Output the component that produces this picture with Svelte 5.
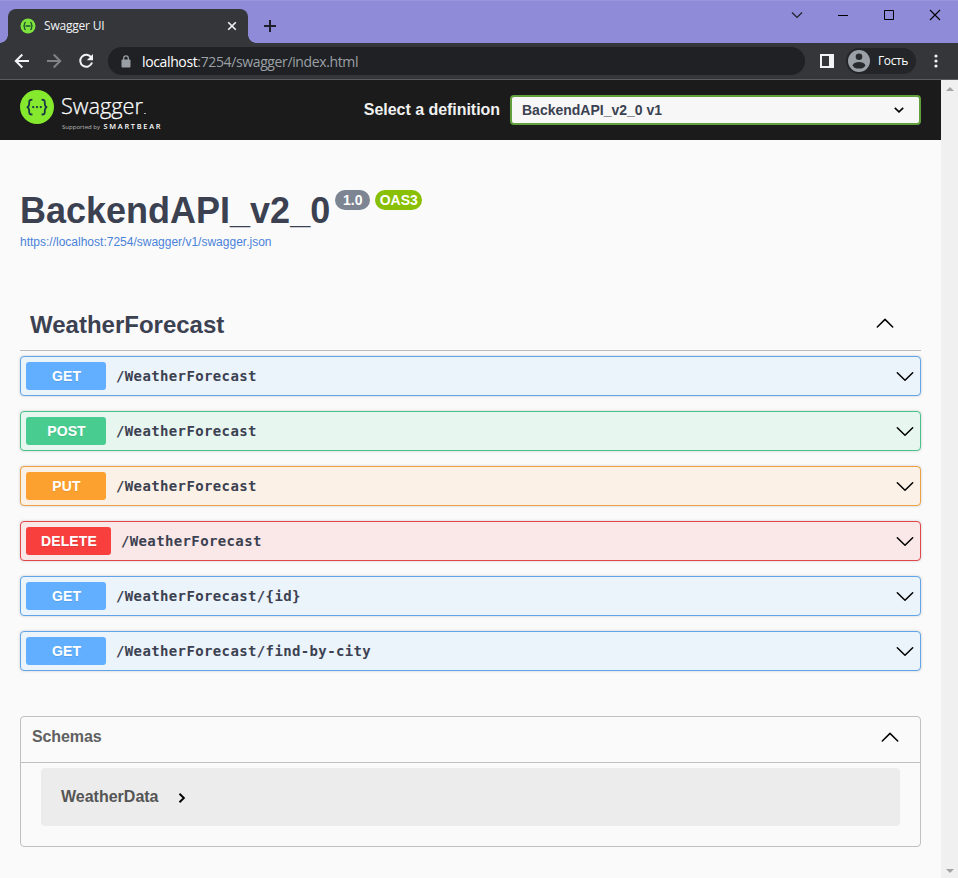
<script>
  const operations = [
    { method: 'GET', kind: 'get', path: '/WeatherForecast' },
    { method: 'POST', kind: 'post', path: '/WeatherForecast' },
    { method: 'PUT', kind: 'put', path: '/WeatherForecast' },
    { method: 'DELETE', kind: 'delete', path: '/WeatherForecast' },
    { method: 'GET', kind: 'get', path: '/WeatherForecast/{id}' },
    { method: 'GET', kind: 'get', path: '/WeatherForecast/find-by-city' }
  ];
</script>

{#snippet chevron(up)}
  <svg class="chevron" width="20" height="20" viewBox="0 0 20 20" fill="none" stroke="#000" stroke-width="1.5" stroke-linecap="round" stroke-linejoin="round">
    <path d={up ? 'M2.3 14 10 6.4l7.7 7.6' : 'M2.3 6.700 10 14.300l7.700-7.600'} />
  </svg>
{/snippet}

<div class="window">
  <div class="tabstrip">
    <div class="tab">
      <svg class="favicon" width="16" height="16" viewBox="0 0 16 16">
        <circle cx="8" cy="8" r="7.5" fill="#7ee23c" />
        <path d="M5.8 4.3c-1.3 0-1.3.5-1.3 1.7S4.300 8 3.400 8c.9 0 1.100.8 1.100 2s0 1.700 1.300 1.700M10.200 4.300c1.300 0 1.300.5 1.300 1.700s.2 2 1.100 2c-.9 0-1.100.8-1.100 2s0 1.700-1.300 1.700M5.500 8h5" fill="none" stroke="#1d5132" stroke-width="1.300" />
      </svg>
      <span class="tab-title">Swagger UI</span>
      <svg class="tab-close" width="10" height="10" viewBox="0 0 10 10" stroke="#f1f3f4" stroke-width="1.600"><path d="M1.200 1.200l7.600 7.600M8.800 1.200 1.200 8.800" /></svg>
    </div>
    <svg class="new-tab" width="14" height="14" viewBox="0 0 14 14" stroke="#1f1f2b" stroke-width="2"><path d="M7 1v12M1 7h12" /></svg>
    <div class="controls">
      <svg width="12" height="12" viewBox="0 0 12 12" fill="none" stroke="#20202c" stroke-width="1.200"><path d="M1 3.500 6 8.500l5-5" /></svg>
      <svg width="12" height="12" viewBox="0 0 12 12" stroke="#000"><path d="M1 6.500h10" /></svg>
      <svg width="12" height="12" viewBox="0 0 12 12" fill="none" stroke="#000"><path d="M1.500 1.500h9v9h-9z" /></svg>
      <svg width="12" height="12" viewBox="0 0 12 12" stroke="#000" stroke-width="1.100"><path d="M1 1l10 10M11 1 1 11" /></svg>
    </div>
  </div>

  <div class="toolbar">
    <svg class="back" width="16" height="16" viewBox="0 0 16 16" fill="none" stroke="#f1f3f4" stroke-width="2"><path d="M15 8H2M8.300 1.500 1.800 8l6.500 6.500" /></svg>
    <svg class="forward" width="16" height="16" viewBox="0 0 16 16" fill="none" stroke="#818285" stroke-width="2"><path d="M1 8h13M7.700 1.500 14.200 8l-6.500 6.500" /></svg>
    <svg class="reload" width="16" height="16" viewBox="0 0 16 16"><path d="M13.300 4.500A6 6 0 1 0 14 9.500" fill="none" stroke="#f1f3f4" stroke-width="2" /><path d="M15 1v6.200H8.800z" fill="#f1f3f4" /></svg>
    <div class="address">
      <svg width="10" height="13" viewBox="0 0 10 13"><rect x="0.500" y="4.500" width="9" height="8" rx="1" fill="#9aa0a6" /><path d="M2.700 5V3.200a2.300 2.300 0 0 1 4.600 0V5" fill="none" stroke="#9aa0a6" stroke-width="1.300" /></svg>
      <span class="url"><b>localhost</b>:7254/swagger/index.html</span>
    </div>
    <svg class="panel" width="14" height="14" viewBox="0 0 14 14"><path fill="#f1f3f4" fill-rule="evenodd" d="M0 0h14v14H0zM2 2v10h7V2z" /></svg>
    <div class="profile">
      <svg width="22" height="22" viewBox="0 0 22 22"><circle cx="11" cy="11" r="11" fill="#9aa0a6" /><circle cx="11" cy="6.800" r="3.300" fill="#292a2d" /><ellipse cx="11" cy="15.300" rx="6.200" ry="3.300" fill="#292a2d" /></svg>
      <span>Гость</span>
    </div>
    <svg class="dots" width="4" height="14" viewBox="0 0 4 14" fill="#f1f3f4"><circle cx="2" cy="2" r="1.600" /><circle cx="2" cy="7" r="1.600" /><circle cx="2" cy="12" r="1.600" /></svg>
  </div>

  <div class="viewport">
    <div class="page">
      <header>
        <svg class="logo" width="144" height="44" viewBox="0 0 144 44">
          <circle cx="17" cy="19" r="17" fill="#85ea2d" />
          <g fill="none" stroke="#173647" stroke-width="1.800">
            <path d="M12.400 11.700c-3 0-3.200.8-3.200 3.200 0 2.700-.4 4-2.400 4.200 2 .2 2.400 1.500 2.400 4.200 0 2.400.2 3.200 3.200 3.200" />
            <path d="M21.600 11.700c3 0 3.200.8 3.200 3.200 0 2.700.4 4 2.400 4.200-2 .2-2.400 1.500-2.400 4.200 0 2.400-.2 3.200-3.200 3.200" />
          </g>
          <g fill="#173647"><circle cx="13.200" cy="19.100" r="1.150" /><circle cx="17" cy="19.100" r="1.150" /><circle cx="20.800" cy="19.100" r="1.150" /></g>
          <text class="brand" x="41" y="26" textLength="82" lengthAdjust="spacingAndGlyphs">Swagger</text>
          <path d="M124 25.500h2" stroke="#aaa" />
          <text class="support" x="42" y="40.500" textLength="38">Supported by</text>
          <text class="bear" x="83.500" y="40.800" textLength="57">SMARTBEAR</text>
        </svg>
        <span class="select-label">Select a definition</span>
        <div class="select">
          <span>BackendAPI_v2_0 v1</span>
          <svg width="10" height="6" viewBox="0 0 10 6" fill="none" stroke="#000" stroke-width="1.600"><path d="M.8.8 5 4.800 9.200.8" /></svg>
        </div>
      </header>

      <main>
        <div class="title-row">
          <h1>BackendAPI_v2_0</h1>
          <span class="badge version">1.0</span>
          <span class="badge oas">OAS3</span>
        </div>
        <a href="#swagger">https://localhost:7254/swagger/v1/swagger.json</a>

        <div class="tag">
          <h3>WeatherForecast</h3>
          {@render chevron(true)}
        </div>

        <div class="operations">
          {#each operations as op}
            <div class="operation {op.kind}">
              <span class="method">{op.method}</span>
              <span class="path">{op.path}</span>
              {@render chevron(false)}
            </div>
          {/each}
        </div>

        <section>
          <div class="schemas-head">
            <h4>Schemas</h4>
            {@render chevron(true)}
          </div>
          <div class="model">
            <span>WeatherData</span>
            <svg width="8" height="12" viewBox="0 0 8 12" fill="none" stroke="#000" stroke-width="1.900"><path d="M1.500 1.700 5.900 6l-4.400 4.300" /></svg>
          </div>
        </section>
      </main>
    </div>
    <div class="scrollbar">
      <svg width="8" height="4" viewBox="0 0 8 4"><path d="M0 4 4 0l4 4z" fill="#a3a3a3" /></svg>
      <svg width="8" height="4" viewBox="0 0 8 4"><path d="M0 0l4 4 4-4z" fill="#a3a3a3" /></svg>
    </div>
  </div>
</div>

<style>
  :global(body) { margin: 0; }
  * { box-sizing: border-box; }
  svg { display: block; flex: none; }
  .window { width: 958px; height: 878px; display: flex; flex-direction: column; overflow: hidden; font-family: "Liberation Sans", Arial, sans-serif; color: #3b4151; }
  .tabstrip { height: 43px; flex: none; background: #8f8bd8; border-top: 1px solid #9a96dd; display: flex; align-items: flex-start; padding-left: 8px; }
  .tab { position: relative; width: 240px; height: 34px; margin-top: 8px; background: #35363a; border-radius: 8px 8px 0 0; display: flex; align-items: center; padding: 0 11px 0 12px; }
  .tab::before, .tab::after { content: ""; position: absolute; bottom: 0; width: 8px; height: 8px; }
  .tab::before { left: -8px; background: radial-gradient(circle at 0 0, transparent 7.500px, #35363a 8px); }
  .tab::after { right: -8px; background: radial-gradient(circle at 100% 0, transparent 7.500px, #35363a 8px); }
  .tab-title { font: 12px "Open Sans", sans-serif; letter-spacing: -0.200px; color: #f1f3f4; margin: -1px 0 0 8px; }
  .tab-close { margin-left: auto; }
  .new-tab { margin: 18px 0 0 15px; }
  .controls { margin: 8px 17px 0 auto; display: flex; gap: 34px; }

  .toolbar { height: 37px; flex: none; background: #35363a; border-bottom: 1px solid #5b5c60; display: flex; align-items: center; padding: 0 20px 0 14px; }
  .forward, .reload { margin-left: 16px; }
  .address { width: 697px; height: 28px; margin-left: 14px; border-radius: 14px; background: #202124; display: flex; align-items: center; padding-left: 13px; }
  .url { font: 14px "Open Sans", sans-serif; letter-spacing: -0.370px; color: #9aa0a6; margin-left: 11px; white-space: nowrap; }
  .url b { font-weight: 400; color: #fff; }
  .panel { margin-left: 15px; }
  .profile { width: 70px; height: 26px; margin-left: 12px; border-radius: 13px; background: #242528; display: flex; align-items: center; padding-left: 2px; font: 12px "Open Sans", sans-serif; letter-spacing: -0.400px; color: #fff; }
  .profile span { margin: -1px 0 0 8px; }
  .dots { margin-left: auto; }

  .viewport { flex: 1; display: flex; min-height: 0; }
  .page { width: 941px; background: #fafafa; }
  header { height: 60px; background: #1b1b1b; display: flex; align-items: center; padding: 0 20px; }
  .logo { align-self: flex-start; margin-top: 8px; }
  .brand { font: 300 22px "Open Sans", sans-serif; fill: #fff; stroke: #fff; stroke-width: .25; }
  .support { font: 6px "Open Sans", sans-serif; fill: #bbb; }
  .bear { font: 600 7.400px "Open Sans", sans-serif; fill: #fff; }
  .select-label { margin-left: auto; font-size: 16px; font-weight: 700; letter-spacing: -0.040px; color: #f0f0f0; }
  .select { width: 411px; height: 30px; margin-left: 10px; border: 2px solid #62a03f; border-radius: 4px; background: #f7f7f7; display: flex; align-items: center; justify-content: space-between; padding: 0 15px 0 10px; font-size: 14px; font-weight: 700; }

  main { padding: 50px 20px 0; }
  .title-row { height: 42px; display: flex; align-items: flex-start; }
  h1 { margin: 0; font-size: 36px; line-height: 42px; }
  .badge { height: 20px; border-radius: 10px; color: #fff; font-size: 14px; font-weight: 700; line-height: 20px; text-align: center; }
  .version { width: 35px; margin-left: 5px; background: #7d8492; }
  .oas { width: 47px; margin-left: 5px; background: #89bf04; }
  a { display: block; height: 20px; font-size: 12px; line-height: 20px; color: #4a82d9; text-decoration: none; }
  .tag { height: 55px; margin-top: 44px; border-bottom: 1px solid #bbbcc0; display: flex; align-items: center; justify-content: space-between; padding: 0 26px 0 10px; }
  h3 { margin: 3px 0 0; font-size: 24px; line-height: 30px; }
  .operations { margin-top: 5px; display: flex; flex-direction: column; gap: 15px; }
  .operation { height: 40px; border: 1px solid; border-radius: 4px; box-shadow: 0 0 3px rgba(0,0,0,.19); display: flex; align-items: center; padding: 0 5px; }
  .method { min-width: 80px; height: 28px; padding: 0 14px 0 15px; border-radius: 3px; color: #fff; font-size: 14px; font-weight: 700; letter-spacing: .120px; line-height: 29px; text-align: center; text-shadow: 0 1px 0 rgba(0,0,0,.1); }
  .path { margin: -1px 0 0 10px; font: 700 14px "DejaVu Sans Mono", monospace; letter-spacing: .370px; }
  .operation .chevron { margin-left: auto; }
  .get { border-color: #61a5e8; background: #ebf3fb; }
  .get .method { background: #61affe; }
  .post { border-color: #49c18a; background: #e8f6f0; }
  .post .method { background: #49cc90; }
  .put { border-color: #eba041; background: #fbf1e6; }
  .put .method { background: #fca130; }
  .delete { border-color: #e0464a; background: #fae7e7; }
  .delete .method { background: #f93e3e; }

  section { height: 131px; margin-top: 45px; border: 1px solid #bfc0c3; border-radius: 4px; }
  .schemas-head { height: 46px; border-bottom: 1px solid #bfc0c3; display: flex; align-items: center; justify-content: space-between; padding: 0 20px 0 11px; }
  h4 { margin: 0 0 6px; font-size: 16px; line-height: 20px; letter-spacing: -0.100px; color: #606060; }
  .schemas-head .chevron { margin-top: -5px; }
  .model { height: 58px; margin: 5px 20px 0; border-radius: 4px; background: #ececec; display: flex; align-items: center; padding-left: 20px; font-size: 16px; font-weight: 700; color: #555; }
  .model svg { margin: 2px 0 0 19px; }
  .scrollbar { width: 17px; background: #f0f0f0; display: flex; flex-direction: column; align-items: center; justify-content: space-between; padding: 7px 0 5px; }
</style>
